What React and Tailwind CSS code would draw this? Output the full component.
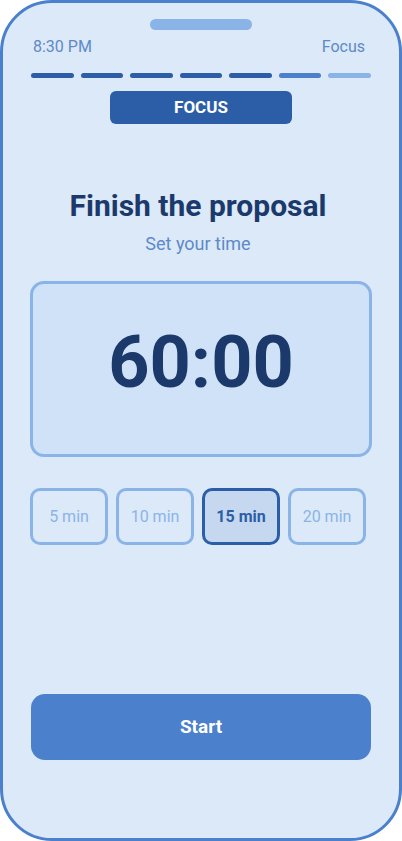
import React, { useState } from 'react';

const durations = [5, 10, 15, 20];

const segments = [
  'bg-[#2c5ea8]',
  'bg-[#2c5ea8]',
  'bg-[#2c5ea8]',
  'bg-[#2c5ea8]',
  'bg-[#2c5ea8]',
  'bg-[#4a80cc]',
  'bg-[#8ab4e8]',
];

const App = () => {
  const [selected, setSelected] = useState(15);

  return (
    <div className="w-[402px] h-[841px] bg-white font-['Roboto',sans-serif]">
      <div className="w-full h-full flex flex-col border-[3px] border-[#4a80cc] rounded-[52px] bg-[#dce9f8] overflow-hidden">
        {/* notch */}
        <div className="flex justify-center pt-[16px]">
          <div className="w-[102px] h-[11px] rounded-full bg-[#8ab4e8]" />
        </div>

        {/* status row */}
        <div className="flex justify-between items-center pl-[30px] pr-[34px] mt-[7px] text-[16px] leading-[20px] text-[#5d8ac8]">
          <span>8:30 PM</span>
          <span>Focus</span>
        </div>

        {/* progress segments */}
        <div className="flex gap-[7px] px-[28px] mt-[16px]">
          {segments.map((c, i) => (
            <div key={i} className={`flex-1 h-[5px] rounded-full ${c}`} />
          ))}
        </div>

        {/* mode badge */}
        <div className="flex justify-center mt-[13px]">
          <div className="w-[182px] h-[33px] flex items-center justify-center rounded-[6px] bg-[#2c5ea8] text-white font-bold text-[17px]">
            FOCUS
          </div>
        </div>

        <h1 className="mt-[64px] pr-[6px] text-center text-[30px] leading-[36px] font-bold text-[#1b3a6b]">
          Finish the proposal
        </h1>
        <p className="mt-[9px] pr-[6px] text-center text-[18px] leading-[22px] text-[#5d8ac8]">
          Set your time
        </p>

        {/* timer */}
        <div className="mx-[27px] mt-[26px] h-[176px] border-[3px] border-[#8ab4e8] rounded-[14px] bg-[#d0e2f7] flex justify-center pt-[43px]">
          <span className="text-[72px] leading-none font-bold text-[#1b3a6b]">60:00</span>
        </div>

        {/* durations */}
        <div className="flex gap-[8px] px-[27px] mt-[31px]">
          {durations.map((d) => {
            const active = d === selected;
            return (
              <button
                key={d}
                type="button"
                onClick={() => setSelected(d)}
                className={
                  active
                    ? 'w-[78px] h-[57px] rounded-[10px] border-[3px] border-[#2c5ea8] bg-[#c5d8ef] text-[#2c5ea8] font-bold text-[16px]'
                    : 'w-[78px] h-[57px] rounded-[10px] border-[3px] border-[#8ab4e8] bg-transparent text-[#8ab4e8] text-[16px]'
                }
              >
                {d} min
              </button>
            );
          })}
        </div>

        <div className="flex-1" />

        <div className="px-[28px] pb-[78px]">
          <button
            type="button"
            className="w-full h-[66px] rounded-[14px] bg-[#4a80cc] text-white font-bold text-[19px]"
          >
            Start
          </button>
        </div>
      </div>
    </div>
  );
};

export default App;
